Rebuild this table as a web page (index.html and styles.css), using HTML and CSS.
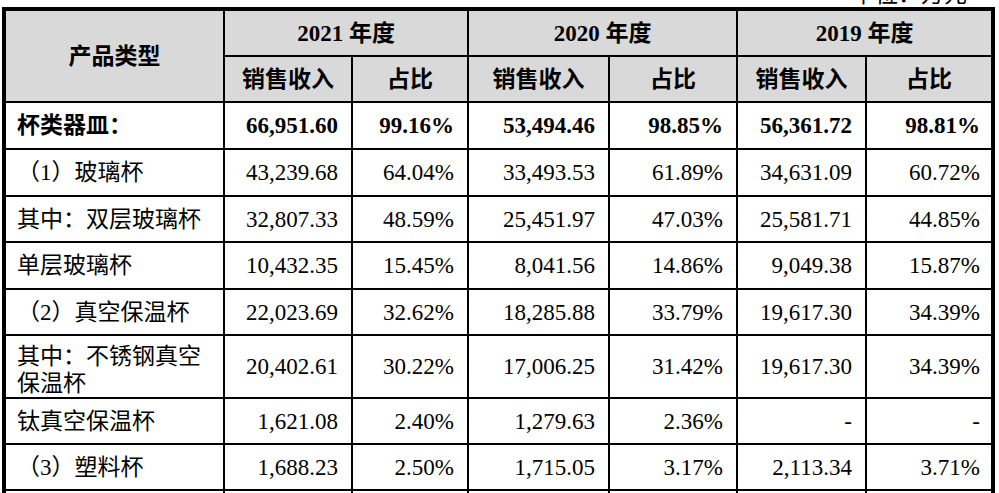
FILE: index.html
```html
<!DOCTYPE html>
<html lang="zh-CN">
<head>
<meta charset="utf-8">
<title>产品类型销售收入</title>
<link rel="stylesheet" href="styles.css">
</head>
<body>
<div class="unit-wrap"><div class="unit">单位：万元</div></div>
<div class="tbl">
  <div class="c hd name">产品类型</div>
  <div class="c hd year">2021 年度</div>
  <div class="c hd year">2020 年度</div>
  <div class="c hd year">2019 年度</div>
  <div class="c hd">销售收入</div>
  <div class="c hd">占比</div>
  <div class="c hd">销售收入</div>
  <div class="c hd">占比</div>
  <div class="c hd">销售收入</div>
  <div class="c hd">占比</div>

  <div class="c lbl b">杯类器皿：</div>
  <div class="c num b">66,951.60</div>
  <div class="c num b">99.16%</div>
  <div class="c num b">53,494.46</div>
  <div class="c num b">98.85%</div>
  <div class="c num b">56,361.72</div>
  <div class="c num b last">98.81%</div>

  <div class="c lbl">（1）玻璃杯</div>
  <div class="c num">43,239.68</div>
  <div class="c num">64.04%</div>
  <div class="c num">33,493.53</div>
  <div class="c num">61.89%</div>
  <div class="c num">34,631.09</div>
  <div class="c num last">60.72%</div>

  <div class="c lbl">其中：双层玻璃杯</div>
  <div class="c num">32,807.33</div>
  <div class="c num">48.59%</div>
  <div class="c num">25,451.97</div>
  <div class="c num">47.03%</div>
  <div class="c num">25,581.71</div>
  <div class="c num last">44.85%</div>

  <div class="c lbl">单层玻璃杯</div>
  <div class="c num">10,432.35</div>
  <div class="c num">15.45%</div>
  <div class="c num">8,041.56</div>
  <div class="c num">14.86%</div>
  <div class="c num">9,049.38</div>
  <div class="c num last">15.87%</div>

  <div class="c lbl">（2）真空保温杯</div>
  <div class="c num">22,023.69</div>
  <div class="c num">32.62%</div>
  <div class="c num">18,285.88</div>
  <div class="c num">33.79%</div>
  <div class="c num">19,617.30</div>
  <div class="c num last">34.39%</div>

  <div class="c lbl two">其中：不锈钢真空<br>保温杯</div>
  <div class="c num">20,402.61</div>
  <div class="c num">30.22%</div>
  <div class="c num">17,006.25</div>
  <div class="c num">31.42%</div>
  <div class="c num">19,617.30</div>
  <div class="c num last">34.39%</div>

  <div class="c lbl">钛真空保温杯</div>
  <div class="c num">1,621.08</div>
  <div class="c num">2.40%</div>
  <div class="c num">1,279.63</div>
  <div class="c num">2.36%</div>
  <div class="c num">-</div>
  <div class="c num last">-</div>

  <div class="c lbl">（3）塑料杯</div>
  <div class="c num">1,688.23</div>
  <div class="c num">2.50%</div>
  <div class="c num">1,715.05</div>
  <div class="c num">3.17%</div>
  <div class="c num">2,113.34</div>
  <div class="c num last">3.71%</div>

  <div class="c lbl"></div>
  <div class="c num"></div>
  <div class="c num"></div>
  <div class="c num"></div>
  <div class="c num"></div>
  <div class="c num"></div>
  <div class="c num last"></div>
</div>
</body>
</html>
```

FILE: styles.css
```css
html, body {
  margin: 0;
  padding: 0;
  background: #fff;
}
body {
  width: 999px;
  height: 493px;
  overflow: hidden;
  font-family: "Liberation Serif", "Noto Sans CJK SC", serif;
  font-size: 23px;
  color: #000;
}
.unit-wrap {
  height: 7px;
  overflow: hidden;
  display: flex;
  justify-content: flex-end;
  padding-right: 32px;
}
.unit {
  line-height: 23px;
  margin-top: -17px;
  white-space: nowrap;
}
.tbl {
  display: grid;
  grid-template-columns: 217px 126px 114px 139px 126px 127px 124px;
  grid-template-rows: 44px 44px 45px 45px 44px 45px 44px 61px 44px 44px 44px;
  gap: 2px;
  padding: 4px;
  background: #000;
  width: max-content;
  margin-left: 2px;
}
.c {
  background: #fff;
  display: flex;
  align-items: center;
  padding: 0 12px;
  white-space: nowrap;
  line-height: 27px;
}
.hd {
  background: #d9d9d9;
  justify-content: center;
  font-weight: 700;
}
.name {
  grid-row: 1 / span 2;
}
.year {
  grid-column: span 2;
}
.lbl {
  padding: 0 10px 0 11px;
}
.two {
  white-space: normal;
  padding-top: 6px;
}
.num {
  justify-content: flex-end;
  padding-right: 13px;
}
.num.last {
  padding-right: 11px;
}
.b {
  font-weight: 700;
}
```
